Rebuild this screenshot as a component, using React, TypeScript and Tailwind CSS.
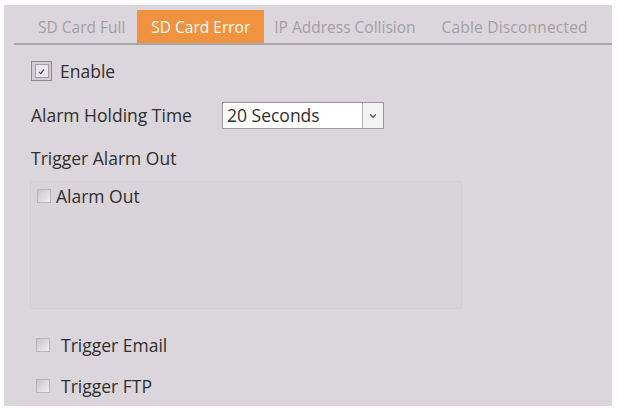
import { ChevronDown } from "lucide-react";

const tabs = [
  { label: "SD Card Full", cls: "ml-[24px]" },
  { label: "SD Card Error", cls: "ml-[12px] bg-[#f0923e] px-[14px] text-white" },
  { label: "IP Address Collision", cls: "ml-[10px]" },
  { label: "Cable Disconnected", cls: "ml-[26px] tracking-[0.2px]" },
];

function Box() {
  return (
    <span className="h-[14px] w-[14px] shrink-0 border border-[#b8b4b8] bg-gradient-to-br from-[#c9c5c9] to-[#f2f0f2]" />
  );
}

export default function App() {
  return (
    <div className="h-[414px] w-[618px] bg-white pt-[5px] pl-[4px] font-['Open_Sans',sans-serif] text-[#2f2f2f]">
      <div className="h-[401px] w-[608px] bg-[#dbd6db]">
        <div className="ml-[10px] flex h-[40px] items-end border-b-2 border-[#a9a6a9] text-[15.5px] text-[#a3a0a3]">
          {tabs.map((t) => (
            <div key={t.label} className={`flex h-[33px] items-center whitespace-nowrap pt-[3px] ${t.cls}`}>
              {t.label}
            </div>
          ))}
        </div>

        <div className="flex flex-col pl-[27px] text-[17.5px]">
          <label className="mt-[15px] flex h-[22px] items-center gap-[8px]">
            <span className="flex h-[20px] w-[21px] items-center justify-center border border-[#8e8a8e] bg-[#d2cdd2]">
              <span className="flex h-[14px] w-[14px] items-center justify-center border border-[#a09ca0] bg-[#e9e6ec]">
                <svg viewBox="0 0 10 10" className="h-[9px] w-[9px]">
                  <path d="M2.2 5.4 L4.2 7.4 L7.8 2.6" fill="none" stroke="#4b4d70" strokeWidth="1.3" />
                </svg>
              </span>
            </span>
            Enable
          </label>

          <div className="mt-[20px] flex h-[27px] items-center">
            <span className="w-[191px]">Alarm Holding Time</span>
            <div className="flex h-[27px] w-[162px] border border-[#9b979b] bg-white">
              <span className="flex flex-1 items-center pl-[4px]">20 Seconds</span>
              <span className="flex w-[21px] items-center justify-center border-l border-[#b5b1b5] bg-[#f4f3f4]">
                <ChevronDown className="h-[10px] w-[10px] text-[#555]" strokeWidth={3} />
              </span>
            </div>
          </div>

          <div className="mt-[18px] h-[22px] leading-[22px]">Trigger Alarm Out</div>

          <div className="mt-[12px] ml-[-1px] h-[128px] w-[432px] border border-[#d3ced3] bg-[#d9d4da] pt-[4px] pl-[6px]">
            <label className="flex h-[20px] items-center gap-[5px]">
              <Box />
              Alarm Out
            </label>
          </div>

          <label className="mt-[25px] ml-[5px] flex h-[22px] items-center gap-[11px]">
            <Box />
            Trigger Email
          </label>
          <label className="mt-[19px] ml-[5px] flex h-[22px] items-center gap-[11px]">
            <Box />
            Trigger FTP
          </label>
        </div>
      </div>
    </div>
  );
}
